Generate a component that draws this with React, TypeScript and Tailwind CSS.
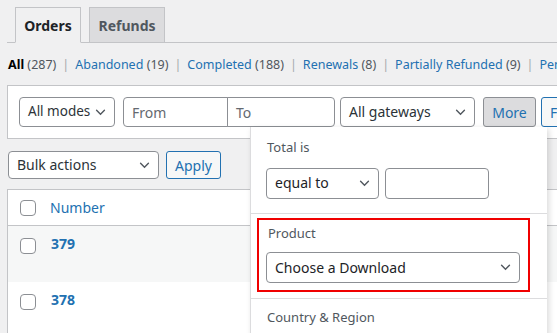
import type { ReactNode } from "react";

const font = { fontFamily: '"Noto Sans", "Open Sans", sans-serif' };

function Chevron({ className = "" }: { className?: string }): JSX.Element {
	return (
		<svg viewBox="0 0 12 8" className={`h-[7px] w-[11px] shrink-0 ${className}`} fill="none">
			<path d="M1.5 1.5 6 6l4.5-4.5" stroke="#50575e" strokeWidth="1.6" strokeLinecap="round" />
		</svg>
	);
}

interface SelectBoxProps {
	label: string;
	className?: string;
	textClass?: string;
}

function SelectBox(props: SelectBoxProps): JSX.Element {
	const { label, className = "", textClass = "text-[14px] text-[#2c3338]" } = props;
	return (
		<div
			className={`flex items-center justify-between gap-1 rounded-[4px] border border-[#8c8f94] bg-white pl-2 pr-2 ${className}`}
		>
			<span className={`whitespace-nowrap leading-none ${textClass}`}>{label}</span>
			<Chevron />
		</div>
	);
}

function Checkbox(): JSX.Element {
	return <span className="block h-4 w-4 shrink-0 rounded-[4px] border border-[#8c8f94] bg-white" />;
}

function Sep(): JSX.Element {
	return <span className="px-[6px] text-[#a7aaad]">|</span>;
}

function Status({ label, count, bold }: { label: string; count: number; bold?: boolean }): ReactNode {
	return (
		<span className="whitespace-nowrap">
			<span className={bold ? "font-bold text-black" : "text-[#2271b1]"}>{label}</span>
			<span className="text-[#50575e]"> ({count})</span>
		</span>
	);
}

export default function App(): JSX.Element {
	return (
		<div className="relative h-[333px] w-[557px] overflow-hidden bg-[#f0f0f1] text-[13px] text-[#2c3338]" style={font}>
			<div className="w-[700px] pl-[7px]">
				<nav className="flex h-[43px] items-end gap-2 border-b border-[#c3c4c7] pl-2">
					<div className="-mb-px flex h-[36px] w-[66px] items-center justify-center border border-b-[#f0f0f1] border-[#c3c4c7] bg-[#f0f0f1] text-[14px] font-bold text-[#1d2327]">
						Orders
					</div>
					<div className="flex h-[35px] w-[76px] items-center justify-center border border-b-0 border-[#c3c4c7] bg-[#dcdcde] text-[14px] font-bold text-[#50575e]">
						Refunds
					</div>
				</nav>

				<div className="-ml-[7px] mt-[12px] flex h-[20px] items-center pl-2 text-[12.5px]">
					<Status label="All" count={287} bold />
					<Sep />
					<Status label="Abandoned" count={19} />
					<Sep />
					<Status label="Completed" count={188} />
					<Sep />
					<Status label="Renewals" count={8} />
					<Sep />
					<Status label="Partially Refunded" count={9} />
					<Sep />
					<Status label="Pending" count={4} />
				</div>

				<div className="mt-[10px] flex h-[54px] items-start gap-2 border border-[#c3c4c7] bg-white pl-[11px] pt-[11px]">
					<SelectBox label="All modes" className="h-[30px] w-[96px]" textClass="text-[13.5px] text-[#2c3338]" />
					<div className="flex h-[30px]">
						<div className="flex w-[105px] items-center rounded-l-[4px] border border-[#8c8f94] px-2 text-[14px] text-[#646970]">
							From
						</div>
						<div className="-ml-px flex w-[108px] items-center rounded-r-[4px] border border-[#8c8f94] px-2 text-[14px] text-[#646970]">
							To
						</div>
					</div>
					<SelectBox label="All gateways" className="-ml-[3px] h-[30px] w-[135px]" />
					<div className="flex h-[30px] w-[53px] items-center justify-center rounded-[3px] border border-[#8c8f94] bg-[#dcdcde] text-[14px] text-[#2271b1]">
						More
					</div>
					<div className="-ml-[3px] flex h-[30px] w-[60px] items-center rounded-[3px] border border-[#2271b1] bg-[#f6f7f7] px-2 text-[14px] text-[#2271b1]">
						Filter
					</div>
				</div>

				<div className="ml-px mt-[12px] flex items-center gap-[7px]">
					<SelectBox label="Bulk actions" className="h-[28px] w-[151px]" />
					<div className="flex h-[28px] w-[55px] items-center justify-center rounded-[3px] border border-[#2271b1] bg-[#f6f7f7] text-[14px] text-[#2271b1]">
						Apply
					</div>
				</div>

				<div className="mt-[10px] border border-[#c3c4c7] bg-white">
					<div className="flex h-[36px] items-center border-b border-[#c3c4c7] pl-3">
						<Checkbox />
						<span className="ml-[14px] text-[14px] text-[#2271b1]">Number</span>
					</div>
					<div className="flex h-[56px] items-start bg-[#f6f7f7] pl-3 pt-[12px]">
						<Checkbox />
						<span className="-mt-[2px] ml-[15px] text-[14px] font-bold leading-[16px] text-[#2271b1]">379</span>
					</div>
					<div className="flex h-[56px] items-start pl-3 pt-[12px]">
						<Checkbox />
						<span className="-mt-[2px] ml-[15px] text-[14px] font-bold leading-[16px] text-[#2271b1]">378</span>
					</div>
				</div>
			</div>

			<div className="absolute left-[250px] top-[127px] w-[297px] border-l border-[#dcdcde] bg-white shadow-[2px_2px_6px_rgba(0,0,0,0.15)]">
				<div className="border-b border-[#dcdcde] px-4 pb-[14px] pt-[11px]">
					<div className="text-[13px] text-[#50575e]">Total is</div>
					<div className="mt-[10px] flex gap-[6px]">
						<SelectBox label="equal to" className="-ml-px h-[31px] w-[113px]" textClass="text-[14px] text-[#1d2327]" />
						<div className="h-[31px] w-[104px] rounded-[4px] border border-[#8c8f94] bg-white" />
					</div>
				</div>
				<div className="border-b border-[#dcdcde] px-[6px] pb-[6px] pt-[4px]">
					<div className="w-[273px] border-2 border-[#f00000] px-[7px] pb-[7px] pt-[4px]">
						<div className="pl-[2px] text-[13px] text-[#50575e]">Product</div>
						<SelectBox
							label="Choose a Download"
							className="mt-[9px] h-[31px] w-[254px] pl-[8px]"
							textClass="text-[14px] text-[#1d2327]"
						/>
					</div>
				</div>
				<div className="px-4 pb-6 pt-[9px] text-[13px] text-[#50575e]">Country &amp; Region</div>
			</div>
		</div>
	);
}
